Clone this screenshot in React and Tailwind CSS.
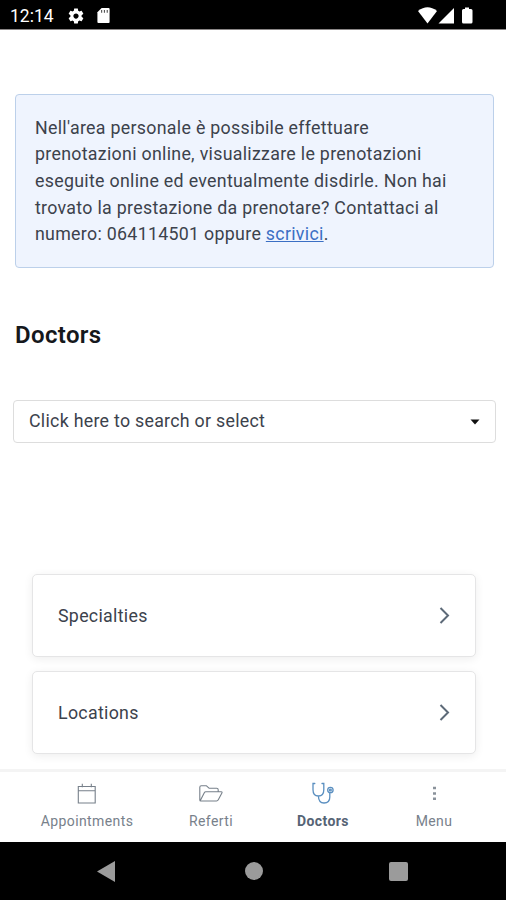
import React from "react";

const links = ["Specialties", "Locations"];

const SettingsIcon = () => (
    <svg className="w-[18px] h-[18px]" viewBox="0 0 24 24" fill="#fff">
        <path d="M19.43 12.98c.04-.32.07-.64.07-.98s-.03-.66-.07-.98l2.11-1.65c.19-.15.24-.42.12-.64l-2-3.46c-.12-.22-.39-.3-.61-.22l-2.49 1c-.52-.4-1.08-.73-1.69-.98l-.38-2.65C14.46 2.18 14.25 2 14 2h-4c-.25 0-.46.18-.49.42l-.38 2.65c-.61.25-1.17.59-1.69.98l-2.49-1c-.23-.09-.49 0-.61.22l-2 3.46c-.13.22-.07.49.12.64l2.11 1.65c-.04.32-.07.65-.07.98s.03.66.07.98l-2.11 1.65c-.19.15-.24.42-.12.64l2 3.46c.12.22.39.3.61.22l2.49-1c.52.4 1.08.73 1.69.98l.38 2.65c.03.24.24.42.49.42h4c.25 0 .46-.18.49-.42l.38-2.65c.61-.25 1.17-.59 1.69-.98l2.49 1c.23.09.49 0 .61-.22l2-3.46c.12-.22.07-.49-.12-.64l-2.110-1.650zM12 15.500c-1.930 0-3.500-1.570-3.500-3.500s1.570-3.500 3.500-3.500 3.500 1.570 3.500 3.500-1.570 3.500-3.500 3.500z" />
    </svg>
);

const CalendarIcon = () => (
    <svg className="w-6 h-6" viewBox="0 0 24 24" fill="none" stroke="#77808a" strokeWidth="1.1">
        <path d="M3.300 4.500h16.900v16.500H3.300zM3.300 8.800h16.900M7.300 1.800v3.500M16.300 1.800v3.500" />
    </svg>
);

const FolderIcon = () => (
    <svg className="w-6 h-6" viewBox="0 0 24 24" fill="none" stroke="#77808a" strokeWidth="1.1" strokeLinejoin="round">
        <path d="M.8 18V5.300q0-1.500 1.500-1.500h5.200l2.500 2.400h7.700q1.500 0 1.500 1.500v2.100M1.200 18.700 5.300 10.700q.5-.9 1.500-.9h15.400q1.300 0 .7 1.100l-3.600 6.900q-.6 1.200-1.800 1.200H1.800q-1 0-1-1" />
    </svg>
);

const StethoscopeIcon = () => (
    <svg className="w-6 h-6" viewBox="0 0 24 24" fill="none" stroke="#5a8fc0" strokeWidth="1.3" strokeLinecap="round">
        <path d="M3.800 1.500H2v6.200c0 4 2.200 6.300 5.400 6.300s5.400-2.300 5.400-6.300V1.500H11M7.400 14c.1 4.500 2 7 5.600 7s5.800-2.400 5.800-6v-4.200" />
        <circle cx="19.400" cy="8" r="2.700" />
        <circle cx="19.400" cy="8" r=".9" />
    </svg>
);

const MenuIcon = () => (
    <svg className="w-6 h-6" viewBox="0 0 24 24" fill="#8a929b">
        <path d="M11 4.800h3v2.500h-3zM11 10.200h3v2.500h-3zM11 15.600h3v2.500h-3z" />
    </svg>
);

const tabs = [
    { name: "Appointments", icon: <CalendarIcon />, className: "w-[126px]" },
    { name: "Referti", icon: <FolderIcon />, className: "w-[78px] ml-[22px]" },
    { name: "Doctors", icon: <StethoscopeIcon />, className: "w-[98px] ml-[24px]", active: true },
    { name: "Menu", icon: <MenuIcon />, className: "w-[72px] ml-[26px]" },
];

const App = () => {
    return (
        <div className="w-[506px] h-[900px] flex flex-col overflow-hidden bg-white font-['Roboto',sans-serif] text-[#3c424c]">
            {/* STATUS BAR */}
            <header className="h-[30px] shrink-0 flex items-center bg-black border-b border-[#8a8686] pl-[10px] pr-[33px] text-white">
                <span className="w-[57px] text-[17.5px] leading-none pt-[4px]">12:14</span>
                <span className="pt-[2px]"><SettingsIcon /></span>
                <svg className="ml-[12px] mt-[2px] w-[13px] h-[15px]" viewBox="0 0 13 16">
                    <path d="M4.500 0H12q1 0 1 1v14q0 1-1 1H1q-1 0-1-1V4.500z" fill="#fff" />
                    <path d="M4.500 2v3M7.500 2v3M10.500 2v3" stroke="#555" strokeWidth="1.200" />
                </svg>
                <svg className="ml-auto mt-[1px] w-[55px] h-[17px]" viewBox="0 0 55 17" fill="#fff">
                    <path d="M0 4Q9.500-3.500 19 4L9.500 16.500z" />
                    <path d="M20.500 16.500 36 1v15.500z" />
                    <path d="M47 .5h4V2h2q1.500 0 1.500 1.500V15q0 1.500-1.500 1.500h-7.500Q44 16.500 44 15V3.500Q44 2 45.500 2H47z" />
                </svg>
            </header>

            <main className="flex-1 min-h-0 flex flex-col">
                {/* INFO */}
                <div className="mt-16 ml-[15px] w-[479px] h-[174px] rounded-[4px] border border-[#bcd0ea] bg-[#eff4fe] pl-[19px] pt-[19.500px]">
                    <p className="text-[17.800px] leading-[26.700px] tracking-[0.300px] whitespace-nowrap">
                        Nell'area personale è possibile effettuare<br />
                        prenotazioni online, visualizzare le prenotazioni<br />
                        eseguite online ed eventualmente disdirle. Non hai<br />
                        trovato la prestazione da prenotare? Contattaci al<br />
                        numero: 064114501 oppure <a href="#" className="text-[#3b6fc4] underline">scrivici</a>.
                    </p>
                </div>

                <h1 className="mt-[51px] ml-[15px] text-[24px] leading-8 tracking-[0.350px] font-semibold text-[#15181c]">Doctors</h1>

                {/* SELECT */}
                <button className="mt-[49px] ml-[13px] w-[483px] h-[43px] shrink-0 flex items-center justify-between rounded-[4px] border border-[#dddddd] pl-[15px] pr-[15px] text-[17.800px] tracking-[0.280px]">
                    <span>Click here to search or select</span>
                    <svg className="w-[10px] h-[6px]" viewBox="0 0 10 6">
                        <path d="M.500.500h9L5 5.500z" fill="#111" />
                    </svg>
                </button>

                {/* LINKS */}
                <div className="mt-[131px] px-8 w-[508px] flex flex-col gap-[14px]">
                    {links.map((link) => (
                        <a key={link} href="#" className="h-[83px] shrink-0 flex items-center justify-between rounded-[5px] border border-[#e5e5e6] bg-white pl-[25px] pr-[25px] text-[17.800px] tracking-[0.300px] shadow-[0_2px_10px_rgba(0,0,0,0.070)]">
                            <span className="pt-px">{link}</span>
                            <svg className="w-[11px] h-[17px]" viewBox="0 0 11 17" fill="none" stroke="#5d6a78" strokeWidth="2">
                                <path d="M1.500 1 9 8.500 1.500 16" />
                            </svg>
                        </a>
                    ))}
                </div>
            </main>

            {/* TABS */}
            <nav className="h-[73px] shrink-0 flex border-t-[3px] border-[#f4f4f4] bg-white pl-[24px]">
                {tabs.map((tab) => (
                    <a key={tab.name} href="#" className={`${tab.className} flex flex-col items-center pt-[10px] text-[#78818b]`}>
                        {tab.icon}
                        <span className={`mt-[5px] text-[14px] leading-5 tracking-[0.400px] ${tab.active ? "font-bold text-[#566475]" : ""}`}>{tab.name}</span>
                    </a>
                ))}
            </nav>

            {/* SYSTEM NAVIGATION */}
            <footer className="h-[58px] shrink-0 flex items-center bg-black pl-[97px]">
                <svg className="w-[18px] h-[21px]" viewBox="0 0 18 21">
                    <path d="M0 10.500 18 0v21z" fill="#9b9b9b" />
                </svg>
                <div className="ml-[130px] w-[18px] h-[18px] rounded-full bg-[#9b9b9b]"></div>
                <div className="ml-[126px] w-[19px] h-[19px] rounded-[2px] bg-[#9b9b9b]"></div>
            </footer>
        </div>
    );
};

export default App;
